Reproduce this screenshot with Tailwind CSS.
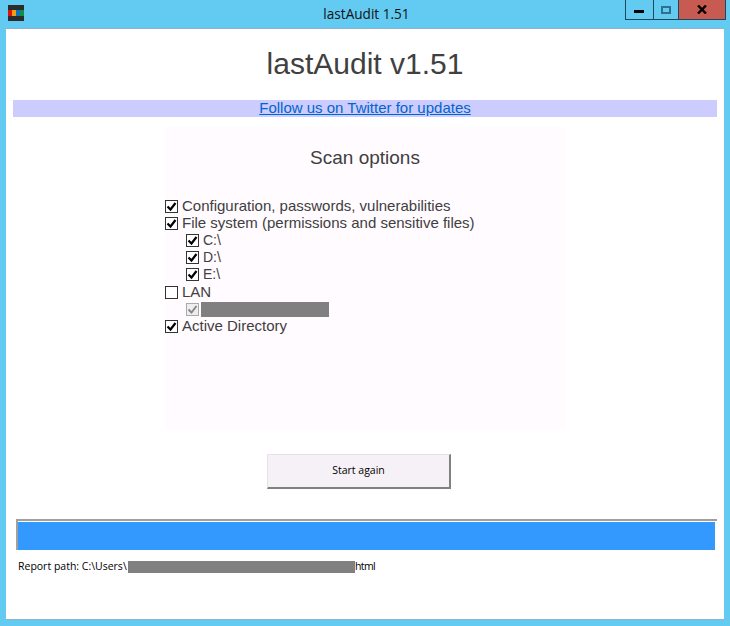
<!doctype html>
<html>
  <head>
    <meta charset="UTF-8" />
    <script src="https://cdn.jsdelivr.net/npm/@tailwindcss/browser@4"></script>
  </head>
  <body class="h-[626px] w-[730px] overflow-hidden bg-[#63cbf1] font-['Liberation_Sans',sans-serif]">
    <!-- title bar -->
    <div class="relative flex h-[28px] items-start justify-between">
      <div class="mt-[5px] ml-[8px] flex h-[16px] w-[16px] items-center bg-[#2b2b2b]">
        <div class="flex h-[6px] w-full">
          <div class="w-[4px] bg-[#e01010]"></div>
          <div class="w-[4px] bg-[#f0a010]"></div>
          <div class="w-[4px] bg-[#1070c0]"></div>
          <div class="w-[4px] bg-[#109040]"></div>
        </div>
      </div>
      <div class="pt-[5px] pl-[84px] font-['Open_Sans',sans-serif] text-[13.6px] leading-[18px] text-[#111]">lastAudit 1.51</div>
      <div class="mr-[4px] flex h-[20px] border border-t-0 border-[#20485c]">
        <div class="flex w-[28px] items-center justify-center border-r border-[#20485c]">
          <div class="mt-[3px] h-[3px] w-[10px] bg-black"></div>
        </div>
        <div class="flex w-[25px] items-center justify-center border-r border-[#20485c]">
          <div class="h-[8px] w-[10px] border-2 border-[#2f708f]"></div>
        </div>
        <div class="flex w-[46px] items-center justify-center bg-[#c75b52]">
          <svg width="10" height="9" viewBox="0 0 10 9"><path d="M1 0.5 L9 8.5 M9 0.5 L1 8.5" stroke="#000" stroke-width="2.4" fill="none" /></svg>
        </div>
      </div>
    </div>

    <!-- client area -->
    <div class="mx-[6px] flex h-[592px] flex-col border-t border-b border-[#8fb3cc] bg-white">
      <h1 class="mt-[16px] text-center text-[30px] leading-[38px] text-[#404040]">lastAudit v1.51</h1>
      <div class="mx-[7px] mt-[17px] h-[17px] bg-[#ccccff] text-center text-[15px] leading-[16px] text-[#0066cc] underline">Follow us on Twitter for updates</div>

      <!-- scan options -->
      <div class="mx-auto mt-[10px] h-[303px] w-[400px] bg-[#fffbff]">
        <div class="pt-[19px] text-center text-[19px] leading-[24px] text-[#404040]">Scan options</div>
        <div class="mt-[27.5px] flex flex-col text-[15px] text-[#404040]">
          <div class="flex h-[17.2px] items-center">
            <svg class="shrink-0" width="13" height="13" viewBox="0 0 13 13"><rect x="0.5" y="0.5" width="12" height="12" fill="#fff" stroke="#333" /><path d="M2.5 6.5 L5.5 9.5 L10.5 3" stroke="#000" stroke-width="2.2" fill="none" /></svg>
            <span class="ml-[4px]">Configuration, passwords, vulnerabilities</span>
          </div>
          <div class="flex h-[17.2px] items-center">
            <svg class="shrink-0" width="13" height="13" viewBox="0 0 13 13"><rect x="0.5" y="0.5" width="12" height="12" fill="#fff" stroke="#333" /><path d="M2.5 6.5 L5.5 9.5 L10.5 3" stroke="#000" stroke-width="2.2" fill="none" /></svg>
            <span class="ml-[4px]">File system (permissions and sensitive files)</span>
          </div>
          <div class="flex h-[17.2px] items-center pl-[21px]">
            <svg class="shrink-0" width="13" height="13" viewBox="0 0 13 13"><rect x="0.5" y="0.5" width="12" height="12" fill="#fff" stroke="#333" /><path d="M2.5 6.5 L5.5 9.5 L10.5 3" stroke="#000" stroke-width="2.2" fill="none" /></svg>
            <span class="ml-[4px] text-[14px]">C:\</span>
          </div>
          <div class="flex h-[17.2px] items-center pl-[21px]">
            <svg class="shrink-0" width="13" height="13" viewBox="0 0 13 13"><rect x="0.5" y="0.5" width="12" height="12" fill="#fff" stroke="#333" /><path d="M2.5 6.5 L5.5 9.5 L10.5 3" stroke="#000" stroke-width="2.2" fill="none" /></svg>
            <span class="ml-[4px] text-[14px]">D:\</span>
          </div>
          <div class="flex h-[17.2px] items-center pl-[21px]">
            <svg class="shrink-0" width="13" height="13" viewBox="0 0 13 13"><rect x="0.5" y="0.5" width="12" height="12" fill="#fff" stroke="#333" /><path d="M2.5 6.5 L5.5 9.5 L10.5 3" stroke="#000" stroke-width="2.2" fill="none" /></svg>
            <span class="ml-[4px] text-[14px]">E:\</span>
          </div>
          <div class="flex h-[17.2px] items-center">
            <svg class="shrink-0" width="13" height="13" viewBox="0 0 13 13"><rect x="0.5" y="0.5" width="12" height="12" fill="#fff" stroke="#333" /></svg>
            <span class="ml-[4px]">LAN</span>
          </div>
          <div class="flex h-[17.2px] items-center pl-[21px]">
            <svg class="shrink-0" width="13" height="13" viewBox="0 0 13 13"><rect x="0.5" y="0.5" width="12" height="12" fill="#eee" stroke="#aaa" /><path d="M2.5 6.5 L5.5 9.5 L10.5 3" stroke="#888" stroke-width="2" fill="none" /></svg>
            <div class="ml-[2px] h-[15px] w-[128px] bg-[#808080]"></div>
          </div>
          <div class="flex h-[17.2px] items-center">
            <svg class="shrink-0" width="13" height="13" viewBox="0 0 13 13"><rect x="0.5" y="0.5" width="12" height="12" fill="#fff" stroke="#333" /><path d="M2.5 6.5 L5.5 9.5 L10.5 3" stroke="#000" stroke-width="2.2" fill="none" /></svg>
            <span class="ml-[4px]">Active Directory</span>
          </div>
        </div>
      </div>

      <!-- button -->
      <div class="mt-[24px] ml-[261px] flex h-[35px] w-[184px] items-center justify-center border-t border-r-2 border-b-2 border-l border-t-[#e6e2e6] border-r-[#808080] border-b-[#808080] border-l-[#e6e2e6] bg-[#f6f1f6] font-['Open_Sans',sans-serif] text-[10.5px] text-black">Start again</div>

      <!-- progress -->
      <div class="mt-[30px] mr-[7px] ml-[10px] h-[31px] border-t-2 border-l-2 border-t-[#a0a0a0] border-l-[#a0a0a0] pr-[2px]">
        <div class="h-[29px] border-t border-white bg-[#3399ff]"></div>
      </div>

      <!-- report path -->
      <div class="mt-[10px] ml-[12px] flex h-[13px] items-center font-['Open_Sans',sans-serif] text-[10.5px] text-black">
        <span class="w-[110px] shrink-0 overflow-hidden whitespace-nowrap">Report path: C:\Users\</span>
        <div class="h-[12px] w-[227px] bg-[#808080]"></div>
        <span class="tracking-[-0.6px]">html</span>
      </div>
    </div>
  </body>
</html>
